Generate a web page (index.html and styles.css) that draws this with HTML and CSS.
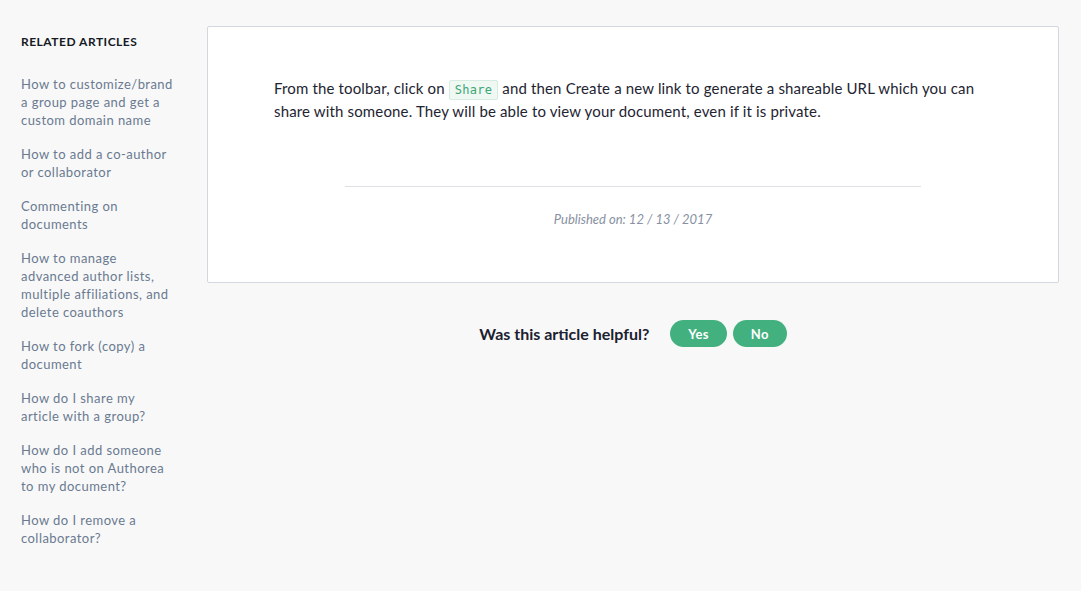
FILE: index.html
```html
<!DOCTYPE html>
<html lang="en">
<head>
<meta charset="utf-8">
<title>Help article</title>
<link rel="stylesheet" href="styles.css">
</head>
<body>
<div class="page">
  <aside class="sidebar">
    <h3 class="sidebar-title">Related Articles</h3>
    <ul class="related">
      <li><a href="#">How to customize/brand a group page and get a custom domain name</a></li>
      <li><a href="#">How to add a co-author or collaborator</a></li>
      <li><a href="#">Commenting on documents</a></li>
      <li><a href="#">How to manage advanced author lists, multiple affiliations, and delete coauthors</a></li>
      <li><a href="#">How to fork (copy) a document</a></li>
      <li><a href="#">How do I share my article with a group?</a></li>
      <li><a href="#">How do I add someone who is not on Authorea to my document?</a></li>
      <li><a href="#">How do I remove a collaborator?</a></li>
    </ul>
  </aside>
  <main class="main">
    <article class="card">
      <p class="body-text">From the toolbar, click on <code class="code">Share</code> and then Create a new link to generate a shareable URL which you can share with someone. They will be able to view your document, even if it is private.</p>
      <hr class="divider">
      <p class="published">Published on: 12 / 13 / 2017</p>
    </article>
    <div class="helpful">
      <span class="helpful-q">Was this article helpful?</span>
      <div class="helpful-btns">
        <button class="btn">Yes</button>
        <button class="btn">No</button>
      </div>
    </div>
  </main>
</div>
</body>
</html>
```

FILE: styles.css
```css
* { box-sizing: border-box; }
html, body { margin: 0; padding: 0; }
body {
  background: #f8f8f8;
  font-family: Lato, "Liberation Sans", sans-serif;
  color: #1e2432;
  width: 1081px;
  height: 591px;
  overflow: hidden;
}
.page {
  display: flex;
  padding: 26px 22px 0 21px;
}
.sidebar {
  width: 186px;
  flex: none;
  padding-top: 10px;
}
.sidebar-title {
  margin: 0;
  font-size: 12px;
  font-weight: 700;
  letter-spacing: 0.5px;
  text-transform: uppercase;
  color: #151a24;
  line-height: 12px;
}
.related {
  list-style: none;
  margin: 27px 0 0;
  padding: 0;
  width: 154px;
}
.related li {
  margin-bottom: 16px;
  font-size: 13px;
  line-height: 18px;
  letter-spacing: 0.45px;
}
.related a {
  color: #6a7a91;
  text-decoration: none;
}
.main {
  flex: 1;
  display: flex;
  flex-direction: column;
}
.card {
  background: #fff;
  border: 1px solid #d3d7de;
  border-radius: 2px;
  height: 257px;
  padding: 50px 66px 0;
}
.body-text {
  margin: 0;
  font-size: 15px;
  line-height: 22px;
  letter-spacing: 0.15px;
}
.code {
  display: inline-block;
  font-family: "DejaVu Sans Mono", "Liberation Mono", monospace;
  font-size: 12px;
  line-height: 18px;
  letter-spacing: 0.3px;
  color: #3da675;
  background: #eff8f3;
  border: 1px solid #d6ece0;
  border-radius: 2px;
  padding: 0 5px;
}
.divider {
  border: none;
  border-top: 1px solid #dde0e5;
  width: 576px;
  margin: 64px auto 0;
}
.published {
  margin: 24px 0 0;
  text-align: center;
  font-size: 13px;
  font-style: italic;
  color: #8891a1;
}
.helpful {
  display: flex;
  justify-content: center;
  align-items: center;
  gap: 21px;
  margin-top: 37px;
}
.helpful-q {
  font-size: 16px;
  font-weight: 700;
  color: #1b2130;
}
.helpful-btns {
  display: flex;
  gap: 6px;
}
.btn {
  font-family: inherit;
  font-size: 13px;
  font-weight: 700;
  letter-spacing: 0.3px;
  color: #fff;
  background: #42b17f;
  border: none;
  border-radius: 14px;
  height: 27px;
  padding: 0 18px;
  cursor: pointer;
}
```
